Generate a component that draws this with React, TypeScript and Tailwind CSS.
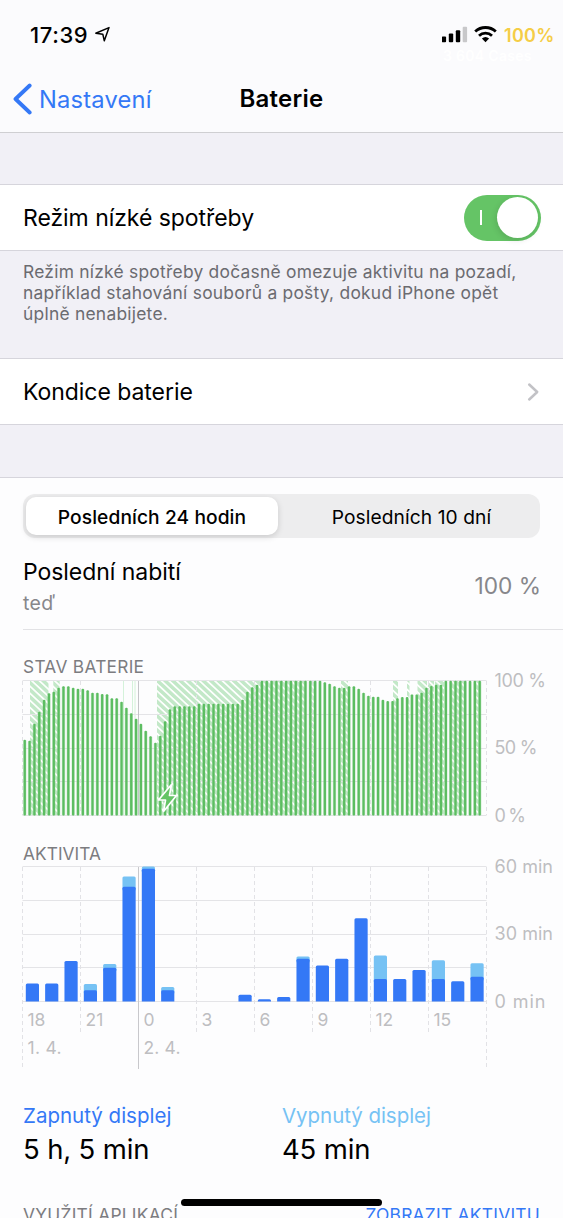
import type { ReactNode } from "react";

const CHART_LEFT = 22.5;
const CHART_RIGHT = 486.5;
const HOUR = (CHART_RIGHT - CHART_LEFT) / 24;

// distance of every bar from the top of the chart, one bar per 15 minutes
const levels = [
  59, 60, 43, 31, 19, 12.5, 11, 7, 5.5, 5.5, 7, 8, 8, 9.5, 12, 12, 13.3, 13.5,
  17.5, 17.5, 21, 27, 32.5, 38, 43, 50, 55.5, 62, 55, 40.5, 28.5, 25.5, 25.5,
  25.5, 25.5, 25.5, 23, 23, 23, 23, 23, 23, 23, 23, 23, 19, 11, 6.5, 4, 0, 0, 0,
  0, 0, 0, 0, 0, 0, 0, 0, 0, 0, 1.5, 3, 5.5, 7, 7, 5.5, 5.5, 8, 12, 15, 16, 16,
  19, 20.3, 20.3, 17.5, 16.3, 16.3, 13.6, 13.6, 12, 7, 5.2, 4, 4, 0, 0, 0, 0, 0,
  0, 0, 0,
];

// [start, end] of the periods on the charger
const charging = [
  [30, 48.5],
  [53.3, 59.7],
  [157, 305],
  [309, 314],
  [341, 348],
  [393, 398],
  [407, 409.5],
  [417.5, 427],
  [428, 434],
  [435, 444],
  [451, 464],
  [475, 478.5],
];

// [hour index, minutes with the screen on, minutes with the screen off]
const activity = [
  [0, 8, 0],
  [1, 8, 0],
  [2, 18, 0],
  [3, 5, 2.8],
  [4, 15, 1.7],
  [5, 51, 4.6],
  [6, 59, 1],
  [7, 5, 1.4],
  [11, 3, 0],
  [12, 1, 0],
  [13, 2, 0],
  [14, 19, 1],
  [15, 16, 0],
  [16, 19, 0],
  [17, 37, 0],
  [18, 10, 10.4],
  [19, 10, 0],
  [20, 14, 0],
  [21, 10, 8.3],
  [22, 9, 0],
  [23, 11, 6],
];

const hours = ["18", "21", "0", "3", "6", "9", "12", "15"];

const Gridlines = ({ top }: { top: number }) => (
  <g stroke="#e4e4e7" strokeWidth="1">
    {[0, 1, 2, 3, 4].map((i) => (
      <line
        key={i}
        x1={CHART_LEFT}
        x2={CHART_RIGHT}
        y1={top + Math.round(i * 33.75)}
        y2={top + Math.round(i * 33.75)}
      />
    ))}
  </g>
);

const BatteryChart = () => (
  <svg
    width="563"
    height="166"
    viewBox="0 0 563 166"
    className="mt-[20px] block shrink-0 overflow-visible"
  >
    <defs>
      <pattern
        id="hatch"
        width="5.2"
        height="5.2"
        patternUnits="userSpaceOnUse"
        patternTransform="rotate(-47)"
      >
        <rect width="5.2" height="5.2" fill="#fff" />
        <rect width="3.5" height="5.2" fill="#c3e8c8" />
      </pattern>
    </defs>
    <text x="23" y="23" className="fill-[#7c7c80] text-[17.3px]" textLength="121">
      STAV BATERIE
    </text>
    {charging.map(([start, end]) => (
      <rect
        key={start}
        x={start}
        y="31"
        width={end - start}
        height="134"
        fill="url(#hatch)"
      />
    ))}
    <g stroke="#c9efd0" strokeWidth="0.8">
      <line x1="123.5" x2="123.5" y1="31" y2="165" />
      <line x1="132.5" x2="132.5" y1="31" y2="165" />
      <line x1="135" x2="135" y1="31" y2="165" />
    </g>
    <Gridlines top={30.5} />
    {[0, 1, 3, 4, 5, 6, 7, 8].map((i) => (
      <line
        key={i}
        x1={CHART_LEFT + i * HOUR * 3}
        x2={CHART_LEFT + i * HOUR * 3}
        y1="31"
        y2="165"
        stroke="#e2e2e6"
        strokeDasharray="4 3"
      />
    ))}
    <line x1="138.5" x2="138.5" y1="31" y2="165" stroke="#c4c4c8" />
    {levels.map((top, i) => (
      <g key={i}>
        <rect
          x={23 + i * 4.84}
          y={31 + top}
          width="3.5"
          height={134.5 - top}
          rx="1"
          fill="#8fd494"
          opacity="0.4"
        />
        <rect
          x={23.6 + i * 4.84}
          y={30.8 + top}
          width="2.3"
          height={134.7 - top}
          rx="1"
          fill="#5cbd61"
        />
      </g>
    ))}
    <path
      d="M171.5 134.5 L158.5 150 H165.5 L163.5 161.5 L176.5 145.5 H169.5 Z"
      fill="#65c466"
      stroke="#fff"
      strokeWidth="1.7"
      strokeLinejoin="round"
    />
    <g className="fill-[#bebec1] text-[18px]">
      <text x="494.5" y="37" textLength="51.5">100 %</text>
      <text x="494.5" y="104" textLength="43">50 %</text>
      <text x="494.5" y="172" textLength="31.5">0 %</text>
    </g>
  </svg>
);

const ActivityChart = () => (
  <svg width="563" height="254" viewBox="0 0 563 254" className="block shrink-0">
    <text x="23" y="43.5" className="fill-[#7c7c80] text-[17.3px]" textLength="78">
      AKTIVITA
    </text>
    <Gridlines top={50.5} />
    {[0, 1, 3, 4, 5, 6, 7, 8].map((i) => (
      <line
        key={i}
        x1={CHART_LEFT + i * HOUR * 3}
        x2={CHART_LEFT + i * HOUR * 3}
        y1="51"
        y2={i % 8 === 0 ? 253 : 216}
        stroke="#e2e2e6"
        strokeDasharray="4 3"
      />
    ))}
    <line x1="138.5" x2="138.5" y1="51" y2="253" stroke="#c8c8cc" />
    {activity.map(([hour, on, off]) => {
      const x = 25.8 + hour * HOUR;
      const onHeight = on * 2.25;
      const offHeight = off * 2.25;
      return (
        <g key={hour}>
          {off > 0 && (
            <rect
              x={x}
              y={185.5 - onHeight - offHeight}
              width="13.2"
              height={offHeight + Math.min(onHeight, 4)}
              rx="1.5"
              fill="#76c2f4"
            />
          )}
          <path
            d={`M${x} 185.5 V${185.5 - onHeight + 1.5} q0 -1.5 1.5 -1.5 h10.2 q1.5 0 1.5 1.5 V185.5 Z`}
            fill="#3478f6"
          />
        </g>
      );
    })}
    <g className="fill-[#bebec1] text-[18px]">
      <text x="494.5" y="57" textLength="58.5">60 min</text>
      <text x="494.5" y="124" textLength="58.5">30 min</text>
      <text x="494.5" y="192" textLength="51">0 min</text>
    </g>
    <g className="fill-[#bebec1] text-[17.5px]">
      {hours.map((hour, i) => (
        <text key={hour} x={27.5 + i * HOUR * 3} y="210">
          {hour}
        </text>
      ))}
      <text x="27.5" y="237.5" textLength="34">1. 4.</text>
      <text x="143.5" y="237.5" textLength="37">2. 4.</text>
    </g>
  </svg>
);

const StatusBar = () => (
  <div className="flex h-[66px] items-start pt-[22px]">
    <span className="ml-[30px] w-[59px] text-[22px] leading-[26px] font-medium tracking-[0.6px] whitespace-nowrap">
      17:39
    </span>
    <svg width="17" height="17" viewBox="0 0 17 17" className="mt-[4px] ml-[5px]">
      <path
        d="M1.8 7.2 L15 1.6 L10.3 14.8 L8.8 8.2 Z"
        fill="none"
        stroke="#000"
        strokeWidth="1.5"
        strokeLinejoin="round"
      />
    </svg>
    <div className="relative ml-auto flex items-start pr-[10px]">
      <svg width="26" height="18" viewBox="0 0 26 18" className="mt-[4px]">
        <rect x="-0.3" y="10.5" width="4.4" height="5.7" rx="1" />
        <rect x="6.8" y="7.6" width="4.4" height="8.6" rx="1" />
        <rect x="13.8" y="4.2" width="4.4" height="12" rx="1" />
        <rect x="20.7" y="0.8" width="4.4" height="15.4" rx="1" fill="#c8c8ca" />
      </svg>
      <svg width="23" height="17" viewBox="0 0 23 17" className="mt-[4px] ml-[6px]">
        <g fill="none" stroke="#000" strokeWidth="2.8">
          <path d="M1.2 5.6 A15 15 0 0 1 21.8 5.6" />
          <path d="M5 9.7 A9.5 9.5 0 0 1 18 9.7" />
        </g>
        <path d="M7.9 12.5 A5.4 5.4 0 0 1 15.1 12.5 L11.5 16.2 Z" />
      </svg>
      <span className="ml-[7px] w-[49px] pt-px text-[18px] leading-[26px] font-semibold tracking-[0.3px] whitespace-nowrap text-[#f5cd46]">
        100%
      </span>
      <span className="absolute top-[23px] left-[1px] text-[14px] font-semibold tracking-[0.3px] whitespace-nowrap text-white">
        3 604 Cases
      </span>
    </div>
  </div>
);

const Header = () => (
  <header className="h-[133px] border-b border-[#cfcfd2] bg-[#fbfbfd]">
    <StatusBar />
    <div className="grid h-[66px] grid-cols-[1fr_auto_1fr] items-center text-[23.7px]">
      <div className="flex items-center pl-[13px] text-[#3478f6]">
        <svg width="20" height="32" viewBox="0 0 20 32">
          <path
            d="M16.7 2.5 L2.5 16 L16.7 29.5"
            fill="none"
            stroke="currentColor"
            strokeWidth="3.8"
            strokeLinecap="round"
            strokeLinejoin="round"
          />
        </svg>
        <span className="mt-[2px] ml-[6px] tracking-[0.2px]">Nastavení</span>
      </div>
      <h1 className="text-[24px] font-semibold tracking-[0.25px]">Baterie</h1>
      <span />
    </div>
  </header>
);

const Row = ({ label, children }: { label: string; children: ReactNode }) => (
  <div className="flex h-[67px] shrink-0 items-center justify-between border-y border-[#d6d5dc] bg-white pr-[22px] pl-[23px]">
    <span className="mt-[2px] text-[23px] tracking-[-0.05px]">{label}</span>
    {children}
  </div>
);

const Toggle = () => (
  <button className="flex h-[46px] w-[77px] shrink-0 items-center justify-between rounded-full bg-[#65c466] pr-[3px] pl-[16px]">
    <span className="h-[15px] w-[2px] bg-white" />
    <span className="size-[41px] rounded-full bg-white shadow-[-1px_2px_6px_rgba(0,0,0,0.12)]" />
  </button>
);

const Summary = () => (
  <div className="grid shrink-0 grid-cols-[259px_1fr] pt-[31px] pl-[23px]">
    <div>
      <p className="text-[20.5px] leading-[30px] text-[#3478f6]">Zapnutý displej</p>
      <p className="pt-px text-[27.5px] leading-[35px] tracking-[-0.15px]">5 h, 5 min</p>
    </div>
    <div>
      <p className="text-[20.5px] leading-[30px] tracking-[-0.05px] text-[#76c2f4]">
        Vypnutý displej
      </p>
      <p className="pt-px text-[27.5px] leading-[35px] tracking-[-0.15px]">45 min</p>
    </div>
  </div>
);

const App = () => {
  return (
    <div className="relative flex h-[1218px] w-[563px] flex-col overflow-hidden bg-[#fdfdfe] font-['Inter','Liberation_Sans',sans-serif] text-black">
      <Header />
      <div className="h-[51px] shrink-0 bg-[#f1f0f6]" />
      <Row label="Režim nízké spotřeby">
        <Toggle />
      </Row>
      <p className="h-[107px] shrink-0 bg-[#f1f0f6] px-[23px] pt-[10px] text-[17.4px] leading-[21px] tracking-[0.25px] whitespace-nowrap text-[#6b6b70]">
        Režim nízké spotřeby dočasně omezuje aktivitu na pozadí,
        <br />
        například stahování souborů a pošty, dokud iPhone opět
        <br />
        úplně nenabijete.
      </p>
      <Row label="Kondice baterie">
        <svg width="14" height="20" viewBox="0 0 14 20">
          <path
            d="M2.2 2.5 L10.2 10 L2.2 17.5"
            fill="none"
            stroke="#c2c2c6"
            strokeWidth="2.5"
            strokeLinecap="round"
            strokeLinejoin="round"
          />
        </svg>
      </Row>
      <div className="h-[53px] shrink-0 border-b border-[#d6d5dc] bg-[#f1f0f6]" />

      <div className="mx-[23px] mt-[16px] flex h-[44px] shrink-0 rounded-[12px] bg-[#ededee] p-[3px] text-[19.2px] tracking-[0.08px]">
        <div className="flex w-[252px] items-center justify-center rounded-[10px] bg-white pt-[2px] font-medium shadow-[0_2px_6px_rgba(0,0,0,0.15)]">
          Posledních 24 hodin
        </div>
        <div className="flex flex-1 items-center justify-center pt-[2px] pl-[8px]">
          Posledních 10 dní
        </div>
      </div>

      <div className="ml-[23px] flex h-[92px] shrink-0 items-center justify-between border-b border-[#e2e2e5] pr-[22px]">
        <div className="pt-[7px]">
          <p className="text-[23px] leading-[32px] tracking-[-0.05px]">Poslední nabití</p>
          <p className="text-[19.5px] leading-[31px] tracking-[0.4px] text-[#87878b]">teď</p>
        </div>
        <span className="mt-[6px] text-[22.7px] text-[#87878b]">100 %</span>
      </div>

      <BatteryChart />
      <ActivityChart />
      <Summary />

      <div className="mt-[36px] flex shrink-0 justify-between px-[23px] text-[17.4px] leading-[24px] tracking-[0.25px]">
        <span className="text-[#7c7c80]">VYUŽITÍ APLIKACÍ</span>
        <span className="text-[#3478f6]">ZOBRAZIT AKTIVITU</span>
      </div>
      <div className="absolute bottom-[12px] left-[181px] h-[7px] w-[201px] rounded-full bg-black" />
    </div>
  );
};

export default App;
